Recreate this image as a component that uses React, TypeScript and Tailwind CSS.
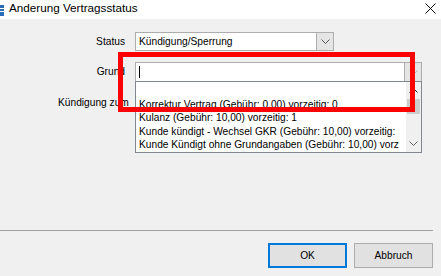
import React from "react";

const font = { fontFamily: '"Liberation Sans", Arial, sans-serif' };

function Chevron({ className = "" }: { className?: string }) {
  return (
    <svg width="9" height="5" viewBox="0 0 9 5" className={className}>
      <polyline points="0.5,0.5 4.5,4.5 8.5,0.5" fill="none" stroke="currentColor" strokeWidth="1" />
    </svg>
  );
}

function ComboButton({ light = false }: { light?: boolean }) {
  return (
    <div className="flex h-full w-[17px] items-center justify-center border-l border-[#adadad] bg-[#e5e5e5]">
      <Chevron className={light ? "text-[#b5b5b5]" : "text-[#555]"} />
    </div>
  );
}

const reasons = [
  "",
  "Korrektur Vertrag (Gebühr: 0,00) vorzeitig: 0",
  "Kulanz (Gebühr: 10,00) vorzeitig: 1",
  "Kunde kündigt - Wechsel GKR (Gebühr: 10,00) vorzeitig:",
  "Kunde Kündigt ohne Grundangaben (Gebühr: 10,00) vorz",
];

export default function App() {
  return (
    <div className="flex h-[276px] w-[441px] flex-col overflow-hidden bg-[#f0f0f0] text-[10.2px] text-black" style={font}>
      {/* title bar */}
      <div className="flex h-[19px] items-start bg-white">
        <svg width="4" height="11" viewBox="0 0 4 11" className="mt-[5px]">
          <rect width="4" height="11" fill="#2b6cb8" />
          <rect y="3" width="4" height="1" fill="#fff" />
          <rect y="6" width="4" height="1" fill="#fff" />
        </svg>
        <span className="ml-[5px] mt-[1px] text-[11.7px] leading-[14px]">Anderung Vertragsstatus</span>
        <svg width="11" height="11" viewBox="0 0 11 11" className="ml-auto mr-[5px] mt-[3px]">
          <path d="M0.5 0.5 L10.5 10.5 M10.5 0.5 L0.5 10.5" stroke="#111" strokeWidth="1" />
        </svg>
      </div>

      {/* form */}
      <div className="relative flex-1">
        <div className="grid grid-cols-[125px_1fr] gap-x-[10px] gap-y-[11px] pt-[13px]">
          <div className="flex h-[19px] items-center justify-end">Status</div>
          <div className="flex h-[19px] w-[199px] border border-[#adadad] bg-white">
            <span className="flex-1 pl-[3px] leading-[17px]">Kündigung/Sperrung</span>
            <ComboButton />
          </div>

          <div className="flex h-[20px] items-center justify-end">Grund</div>
          <div className="relative h-[20px] w-[287px]">
            <div className="flex h-full border border-[#adadad] bg-white">
              <span className="flex flex-1 items-center pl-[3px]">
                <span className="h-[12px] w-px bg-black" />
              </span>
              <ComboButton light />
            </div>
            {/* open dropdown list */}
            <div className="absolute left-0 top-[19px] z-10 flex h-[72px] w-[287px] border border-[#828790] bg-white">
              <div className="flex-1 overflow-hidden pt-[2px]">
                {reasons.map((r, i) => (
                  <div key={i} className="h-[13.5px] whitespace-nowrap pl-[3px] leading-[13.5px]">
                    {r}
                  </div>
                ))}
              </div>
              <div className="flex w-[15px] flex-col bg-[#f0f0f0]">
                <div className="flex h-[17px] items-center justify-center">
                  <Chevron className="rotate-180 text-[#222]" />
                </div>
                <div className="mx-[1px] h-[15px] bg-[#cdcdcd]" />
                <div className="flex-1" />
                <div className="flex h-[17px] items-center justify-center">
                  <Chevron className="text-[#606060]" />
                </div>
              </div>
            </div>
          </div>

          <div className="flex h-[20px] items-center whitespace-nowrap pl-[58px]">Kündigung zum</div>
          <div className="h-[20px]" />
        </div>

        {/* annotation */}
        <div className="pointer-events-none absolute left-[118px] top-[33px] z-20 h-[60px] w-[297px] border-[5px] border-[#ff0000]" />
      </div>

      {/* footer */}
      <div className="mr-[8px] border-t border-[#a0a0a0]" />
      <div className="flex justify-end gap-[7px] pb-[8px] pr-[8px] pt-[12px]">
        <button className="h-[25px] w-[79px] border-2 border-[#0078d7] bg-[#e1e1e1] text-[10.2px]">OK</button>
        <button className="h-[25px] w-[79px] border border-[#adadad] bg-[#e1e1e1] text-[10.2px]">Abbruch</button>
      </div>
    </div>
  );
}
